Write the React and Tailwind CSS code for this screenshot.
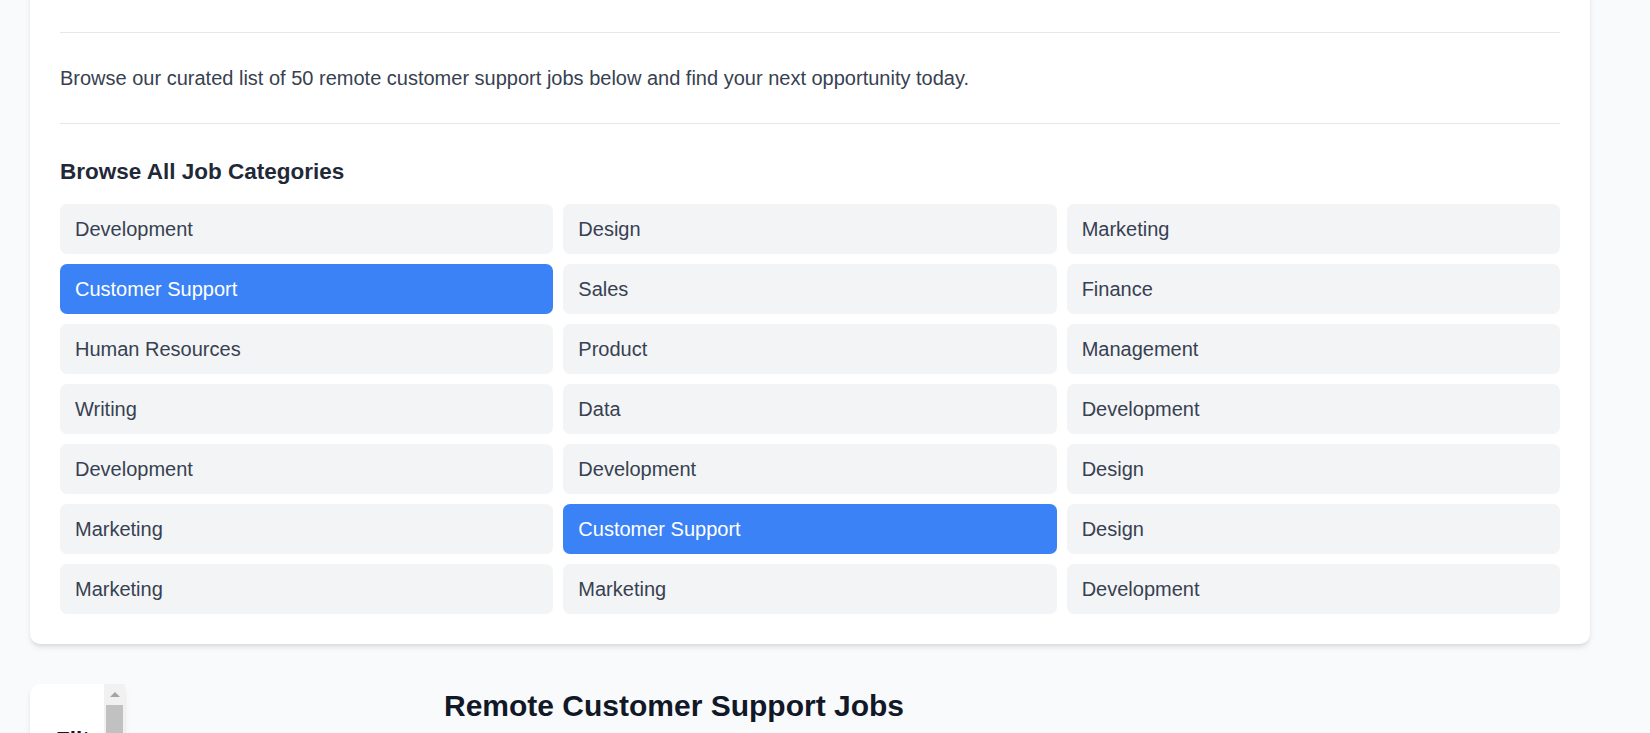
const categories = [
  'Development', 'Design', 'Marketing',
  'Customer Support', 'Sales', 'Finance',
  'Human Resources', 'Product', 'Management',
  'Writing', 'Data', 'Development',
  'Development', 'Development', 'Design',
  'Marketing', 'Customer Support', 'Design',
  'Marketing', 'Marketing', 'Development',
]

function CategoryButton({ label }) {
  const active = label === 'Customer Support'
  return (
    <button
      type="button"
      className={
        active
          ? 'rounded-[7px] bg-[#3b82f6] px-[15px] py-[10px] text-left text-[20px] leading-[30px] text-white'
          : 'rounded-[7px] bg-[#f3f4f6] px-[15px] py-[10px] text-left text-[20px] leading-[30px] text-[#374151]'
      }
    >
      {label}
    </button>
  )
}

function FakeScrollbar() {
  return (
    <div className="flex w-[21px] shrink-0 flex-col items-center bg-[#f1f1f1]">
      <div className="flex h-[21px] w-full items-center justify-center">
        <div className="h-0 w-0 border-x-[5px] border-b-[5px] border-x-transparent border-b-[#a3a3a3]" />
      </div>
      <div className="h-[200px] w-[17px] bg-[#c1c1c1]" />
    </div>
  )
}

export default function App() {
  return (
    <div className="h-[733px] overflow-hidden bg-[#f9fafb] font-['Liberation_Sans',Arial,sans-serif]">
      <div className="pl-[30px] pr-[60px]">
        <div className="-mt-[20px] rounded-[10px] bg-white px-[30px] pt-[52px] pb-[30px] shadow-md">
          <hr className="border-[#e5e7eb]" />
          <p className="my-[30px] text-[20px] leading-[30px] text-[#374151]">
            Browse our curated list of 50 remote customer support jobs below and find your next opportunity today.
          </p>
          <hr className="border-[#e5e7eb]" />
          <h2 className="mt-[30px] mb-[15px] text-[22.5px] leading-[35px] font-semibold text-[#1f2937]">
            Browse All Job Categories
          </h2>
          <div className="grid grid-cols-3 gap-[10px]">
            {categories.map((c, i) => (
              <CategoryButton key={i} label={c} />
            ))}
          </div>
        </div>

        <div className="mt-[40px] flex items-start">
          <aside className="flex h-[400px] w-[95px] shrink-0 overflow-hidden rounded-l-[10px] bg-white shadow-md">
            <div className="min-w-0 flex-1 overflow-hidden pt-[38px] pl-[26px]">
              <h3 className="whitespace-nowrap text-[22.5px] leading-[35px] font-semibold text-[#111827]">Filters</h3>
            </div>
            <FakeScrollbar />
          </aside>
          <main className="ml-[20px] w-[1058px] pt-[2px] text-center">
            <h1 className="text-[30px] leading-[40px] font-bold text-[#111827]">Remote Customer Support Jobs</h1>
          </main>
        </div>
      </div>
    </div>
  )
}
